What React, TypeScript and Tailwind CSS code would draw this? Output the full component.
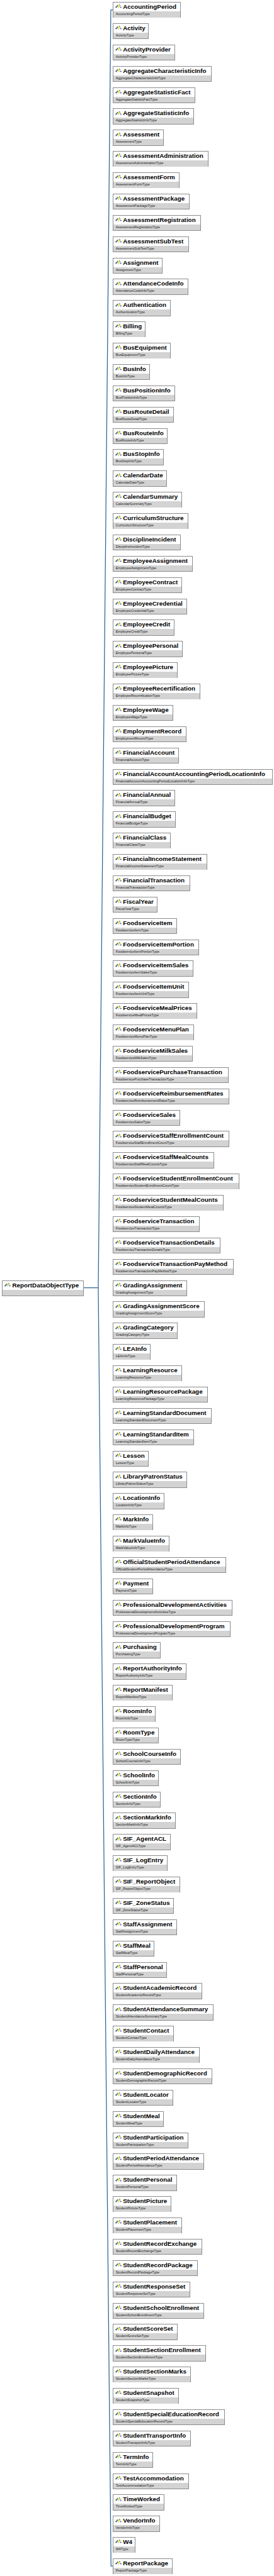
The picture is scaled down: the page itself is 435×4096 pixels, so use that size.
const SCALE = 0.6153;

// [element name, box width in the full-size diagram]
const ITEMS: [string, number][] = [
  ["AccountingPeriod", 176], ["Activity", 93], ["ActivityProvider", 160],
  ["AggregateCharacteristicInfo", 255], ["AggregateStatisticFact", 213], ["AggregateStatisticInfo", 210],
  ["Assessment", 131], ["AssessmentAdministration", 247], ["AssessmentForm", 172],
  ["AssessmentPackage", 198], ["AssessmentRegistration", 227], ["AssessmentSubTest", 196],
  ["Assignment", 128], ["AttendanceCodeInfo", 195], ["Authentication", 149],
  ["Billing", 84], ["BusEquipment", 150], ["BusInfo", 95],
  ["BusPositionInfo", 160], ["BusRouteDetail", 157], ["BusRouteInfo", 142],
  ["BusStopInfo", 132], ["CalendarDate", 140], ["CalendarSummary", 179],
  ["CurriculumStructure", 195], ["DisciplineIncident", 175], ["EmployeeAssignment", 206],
  ["EmployeeContract", 179], ["EmployeeCredential", 192], ["EmployeeCredit", 159],
  ["EmployeePersonal", 181], ["EmployeePicture", 168], ["EmployeeRecertification", 226],
  ["EmployeeWage", 156], ["EmploymentRecord", 190], ["FinancialAccount", 171],
  ["FinancialAccountAccountingPeriodLocationInfo", 412], ["FinancialAnnual", 161], ["FinancialBudget", 162],
  ["FinancialClass", 149], ["FinancialIncomeStatement", 243], ["FinancialTransaction", 199],
  ["FiscalYear", 116], ["FoodserviceItem", 165], ["FoodserviceItemPortion", 222],
  ["FoodserviceItemSales", 208], ["FoodserviceItemUnit", 197], ["FoodserviceMealPrices", 217],
  ["FoodserviceMenuPlan", 209], ["FoodserviceMilkSales", 206], ["FoodservicePurchaseTransaction", 299],
  ["FoodserviceReimbursementRates", 300], ["FoodserviceSales", 174], ["FoodserviceStaffEnrollmentCount", 301],
  ["FoodserviceStaffMealCounts", 261], ["FoodserviceStudentEnrollmentCount", 326], ["FoodserviceStudentMealCounts", 286],
  ["FoodserviceTransaction", 224], ["FoodserviceTransactionDetails", 278], ["FoodserviceTransactionPayMethod", 312],
  ["GradingAssignment", 191], ["GradingAssignmentScore", 237], ["GradingCategory", 168],
  ["LEAInfo", 97], ["LearningResource", 179], ["LearningResourcePackage", 245],
  ["LearningStandardDocument", 255], ["LearningStandardItem", 209], ["Lesson", 92],
  ["LibraryPatronStatus", 192], ["LocationInfo", 133], ["MarkInfo", 103],
  ["MarkValueInfo", 146], ["OfficialStudentPeriodAttendance", 292], ["Payment", 103],
  ["ProfessionalDevelopmentActivities", 309], ["ProfessionalDevelopmentProgram", 304], ["Purchasing", 124],
  ["ReportAuthorityInfo", 190], ["ReportManifest", 154], ["RoomInfo", 111],
  ["RoomType", 119], ["SchoolCourseInfo", 176], ["SchoolInfo", 119],
  ["SectionInfo", 124], ["SectionMarkInfo", 162], ["SIF_AgentACL", 149],
  ["SIF_LogEntry", 141], ["SIF_ReportObject", 173], ["SIF_ZoneStatus", 158],
  ["StaffAssignment", 165], ["StaffMeal", 107], ["StaffPersonal", 140],
  ["StudentAcademicRecord", 230], ["StudentAttendanceSummary", 260], ["StudentContact", 157],
  ["StudentDailyAttendance", 224], ["StudentDemographicRecord", 257], ["StudentLocator", 156],
  ["StudentMeal", 132], ["StudentParticipation", 195], ["StudentPeriodAttendance", 236],
  ["StudentPersonal", 165], ["StudentPicture", 151], ["StudentPlacement", 178],
  ["StudentRecordExchange", 230], ["StudentRecordPackage", 219], ["StudentResponseSet", 200],
  ["StudentSchoolEnrollment", 236], ["StudentScoreSet", 167], ["StudentSectionEnrollment", 241],
  ["StudentSectionMarks", 202], ["StudentSnapshot", 170], ["StudentSpecialEducationRecord", 289],
  ["StudentTransportInfo", 202], ["TermInfo", 104], ["TestAccommodation", 197],
  ["TimeWorked", 133], ["VendorInfo", 121], ["W4", 59], ["ReportPackage", 154],
];

function TypeIcon() {
  return (
    <svg viewBox="0 0 16 12" className="w-[10px] h-[7.5px] shrink-0">
      <path d="M0 7 L6 1 L8 3 L2 9 Z" fill="#2f5f96" />
      <path d="M3 3 L5 1 L7 0 L4 4 Z" fill="#ffee22" />
      <path d="M7 9 L12 4 L9 2 L10 0 L11 0 L13 3 L8 9 Z" fill="#2f5f96" />
      <path d="M5 6 L10 1 L12 3 L7 8 Z" fill="#ffee22" />
      <path d="M14 5 L16 7 L14 9 L12 7 Z" fill="#2f5f96" />
    </svg>
  );
}

function TypeBox({ name, sub, width }: { name: string; sub?: string; width: number }) {
  return (
    <div
      className="h-[25.25px] shrink-0 flex flex-col bg-white border border-[#8c8c8c]"
      style={{ width: width * SCALE }}
    >
      <div className="h-[14px] shrink-0 flex items-center pl-[2.6px] gap-[2.5px] overflow-hidden">
        <TypeIcon />
        <span className="text-[9.85px] leading-[14px] font-bold text-black whitespace-nowrap">{name}</span>
      </div>
      <div className="flex-1 bg-[#d3d3d3] pl-[3.6px] text-[5.45px] leading-[9.5px] text-[#1c1c1c] whitespace-nowrap">
        {sub}
      </div>
    </div>
  );
}

export default function App() {
  return (
    <div className="w-[435px] h-[4096px] bg-white pt-[3.1px] pl-[3.3px] font-['Liberation_Sans',Arial,sans-serif] overflow-hidden">
      <div className="flex items-center">
        <TypeBox name="ReportDataObjectType" width={211} />
        <svg
          viewBox="216 5 75 6641"
          preserveAspectRatio="none"
          className="w-[46px] h-[4090px] shrink-0"
          fill="none"
          stroke="#2f6497"
          strokeWidth="1.25"
        >
          <path
            d="M291 26 L286 26 L253.5 3325 L286.5 6625 L291 6625 M216 3325 L253.5 3325"
            vectorEffect="non-scaling-stroke"
          />
        </svg>
        <div className="flex flex-col gap-[8.625px]">
          {ITEMS.map(([name, width]) => (
            <TypeBox key={name} name={name} sub={name + "Type"} width={width} />
          ))}
        </div>
      </div>
    </div>
  );
}
